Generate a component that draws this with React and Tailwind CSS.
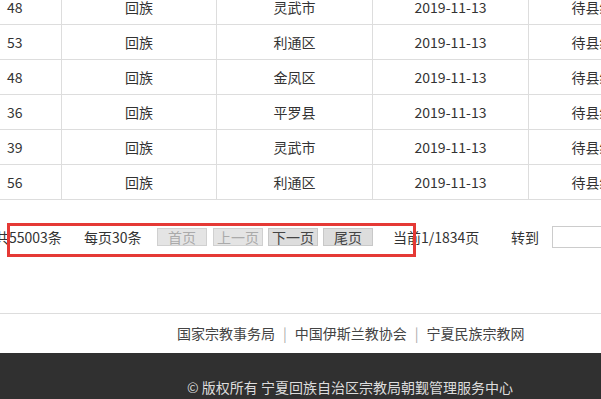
import React from "react";

const rows = [
  ["48", "回族", "灵武市", "2019-11-13", "待县级审核"],
  ["53", "回族", "利通区", "2019-11-13", "待县级审核"],
  ["48", "回族", "金凤区", "2019-11-13", "待县级审核"],
  ["36", "回族", "平罗县", "2019-11-13", "待县级审核"],
  ["39", "回族", "灵武市", "2019-11-13", "待县级审核"],
  ["56", "回族", "利通区", "2019-11-13", "待县级审核"],
];

const font = { fontFamily: '"Noto Sans CJK SC", "Open Sans", sans-serif' };

export default function App() {
  return (
    <div
      className="w-[601px] h-[399px] overflow-hidden bg-white text-[14px] text-[#333]"
      style={font}
    >
      {/* table */}
      <div className="-mt-[10px] w-[800px]">
        {rows.map((r, i) => (
          <div key={i} className="flex h-[35px] border-b border-[#dddddd]">
            <div className="w-[62px] shrink-0 border-r border-[#dddddd] flex items-center pl-[7px]">
              {r[0]}
            </div>
            <div className="w-[155px] shrink-0 border-r border-[#dddddd] flex items-center justify-center">
              {r[1]}
            </div>
            <div className="w-[156px] shrink-0 border-r border-[#dddddd] flex items-center justify-center">
              {r[2]}
            </div>
            <div className="w-[156px] shrink-0 border-r border-[#dddddd] flex items-center justify-center">
              {r[3]}
            </div>
            <div className="w-[155px] shrink-0 flex items-center justify-center">
              {r[4]}
            </div>
          </div>
        ))}
      </div>

      {/* pagination */}
      <div className="relative h-[113px] pt-[26px]">
        <div className="flex items-center h-[22px] whitespace-nowrap">
          <span className="-ml-[5px] w-[68px] shrink-0">共55003条</span>
          <span className="ml-[21px] w-[60px] shrink-0">每页30条</span>
          <span className="ml-[13px] w-[50px] h-[18px] shrink-0 flex items-center justify-center bg-[#e4e4e4] border border-[#d0d0d0] text-[#aaaaaa]">
            首页
          </span>
          <span className="ml-[6px] w-[50px] h-[18px] shrink-0 flex items-center justify-center bg-[#e4e4e4] border border-[#d0d0d0] text-[#aaaaaa]">
            上一页
          </span>
          <span className="ml-[5px] w-[50px] h-[18px] shrink-0 flex items-center justify-center bg-[#dddddd] border border-[#c8c8c8] text-[#444]">
            下一页
          </span>
          <span className="ml-[5px] w-[50px] h-[18px] shrink-0 flex items-center justify-center bg-[#dddddd] border border-[#c8c8c8] text-[#444]">
            尾页
          </span>
          <span className="ml-[20px] w-[98px] shrink-0">当前1/1834页</span>
          <span className="ml-[20px] w-[30px] shrink-0">转到</span>
          <span className="ml-[11px] w-[80px] h-[22px] shrink-0 border border-[#cccccc] bg-white"></span>
        </div>
        <div className="absolute left-[7px] top-[23px] w-[409px] h-[34px] border-[3px] border-[#e53935] pointer-events-none"></div>
      </div>

      {/* links */}
      <div className="h-[40px] border-t border-[#dddddd] flex items-center pl-[177px] text-[#444] whitespace-nowrap">
        <span>国家宗教事务局</span>
        <span className="mx-[8px] text-[#aaaaaa]">|</span>
        <span>中国伊斯兰教协会</span>
        <span className="mx-[8px] text-[#aaaaaa]">|</span>
        <span>宁夏民族宗教网</span>
      </div>

      {/* footer */}
      <div className="h-[80px] bg-[#303030] pt-[24px] pl-[187px] text-[#dddddd] leading-[20px] whitespace-nowrap">
        © 版权所有 宁夏回族自治区宗教局朝觐管理服务中心
      </div>
    </div>
  );
}
